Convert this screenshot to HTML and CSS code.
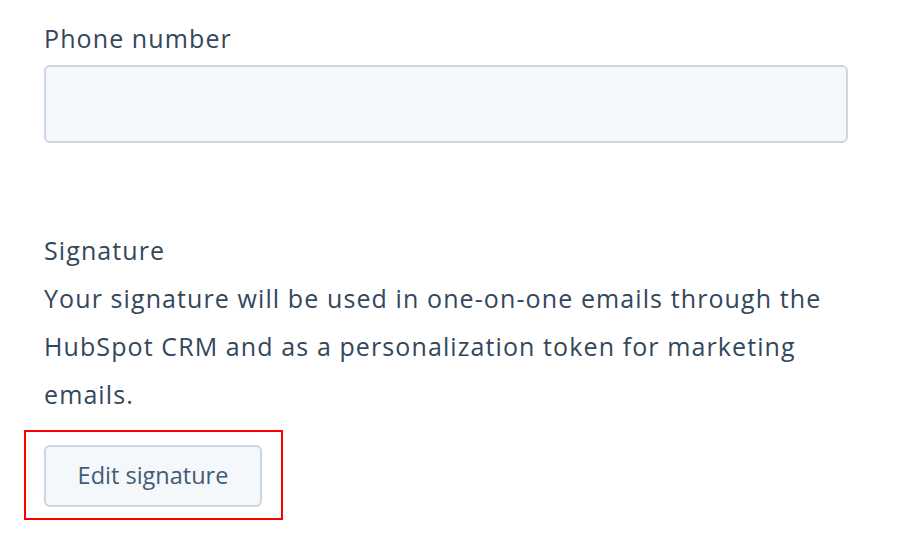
FILE: index.html
```html
<!DOCTYPE html>
<html>
<head>
<meta charset="utf-8">
<link rel="stylesheet" href="styles.css">
</head>
<body>
<div class="page">
  <div class="field">
    <label class="label">Phone number</label>
    <div class="input"></div>
  </div>
  <div class="section">
    <div class="label">Signature</div>
    <p class="help">Your signature will be used in one-on-one emails through the<br>HubSpot CRM and as a personalization token for marketing<br>emails.</p>
    <div class="highlight">
      <button class="btn">Edit signature</button>
    </div>
  </div>
</div>
</body>
</html>
```
FILE: styles.css
```css
html, body {
  margin: 0;
  padding: 0;
  background: #ffffff;
}
.page {
  padding: 14px 54px 0 44px;
  font-family: "Open Sans", "Noto Sans", sans-serif;
  color: #33475b;
  font-size: 25px;
  letter-spacing: 1.1px;
}
.label {
  display: block;
  line-height: 48px;
  height: 48px;
}
.input {
  margin-top: 3px;
  width: 804px;
  height: 78px;
  box-sizing: border-box;
  border: 2px solid #cbd6e2;
  border-radius: 6px;
  background: #f5f8fa;
}
.section {
  margin-top: 83px;
}
.help {
  margin: 0;
  line-height: 48px;
  white-space: nowrap;
}
.highlight {
  display: inline-block;
  margin-top: 12px;
  margin-left: -20px;
  padding: 13px 19px 11px 18px;
  border: 2px solid #ff0000;
}
.btn {
  display: block;
  width: 218px;
  height: 62px;
  box-sizing: border-box;
  border: 2px solid #cbd6e2;
  border-radius: 6px;
  background: #f5f8fa;
  color: #425b76;
  font-family: inherit;
  font-size: 23.5px;
  letter-spacing: 0;
  padding: 0 0 2px 0;
  cursor: pointer;
}
```
